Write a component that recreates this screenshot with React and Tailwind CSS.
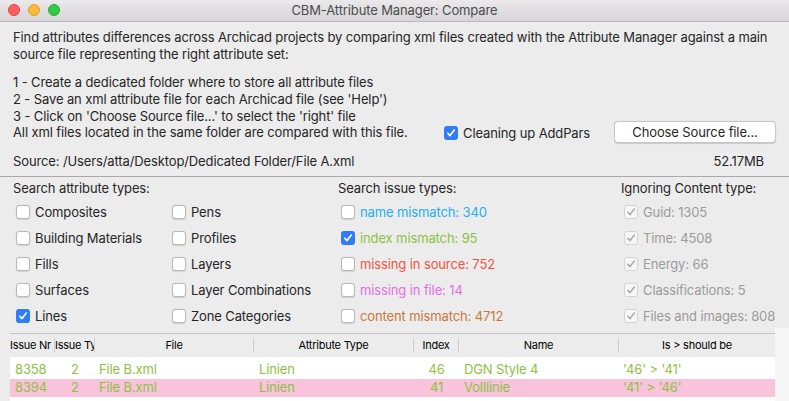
import React from 'react';

const FONT = { fontFamily: 'Inter, "Liberation Sans", sans-serif' };

function Check({ checked = false, disabled = false }) {
  if (disabled) {
    return (
      <span className="flex h-[14px] w-[14px] shrink-0 items-center justify-center rounded-[3px] border border-[#d4d4d4] bg-[#f6f6f6]">
        {checked && (
          <svg width="10" height="10" viewBox="0 0 10 10">
            <path d="M1.8 5.2 L4 7.6 L8.3 2" fill="none" stroke="#a8a8a8" strokeWidth="1.5" strokeLinecap="round" strokeLinejoin="round" />
          </svg>
        )}
      </span>
    );
  }
  if (checked) {
    return (
      <span className="flex h-[14px] w-[14px] shrink-0 items-center justify-center rounded-[3px] bg-[#2f7cf6]">
        <svg width="10" height="10" viewBox="0 0 10 10">
          <path d="M1.8 5.2 L4 7.6 L8.3 2" fill="none" stroke="#ffffff" strokeWidth="1.6" strokeLinecap="round" strokeLinejoin="round" />
        </svg>
      </span>
    );
  }
  return <span className="h-[14px] w-[14px] shrink-0 rounded-[3px] border border-[#b9b9b9] bg-white shadow-[0_0.5px_1px_rgba(0,0,0,0.12)]" />;
}

function Option({ label, checked, disabled, color }) {
  return (
    <div className="flex h-[26px] items-center gap-[5px] whitespace-nowrap pl-[3px]">
      <Check checked={checked} disabled={disabled} />
      <span className={disabled ? 'text-[#9b9b9b]' : ''} style={color ? { color } : undefined}>
        {label}
      </span>
    </div>
  );
}

const attrCol1 = [
  { label: 'Composites' },
  { label: 'Building Materials' },
  { label: 'Fills' },
  { label: 'Surfaces' },
  { label: 'Lines', checked: true }
];

const attrCol2 = [
  { label: 'Pens' },
  { label: 'Profiles' },
  { label: 'Layers' },
  { label: 'Layer Combinations' },
  { label: 'Zone Categories' }
];

const issues = [
  { label: 'name mismatch: 340', color: '#23aef2' },
  { label: 'index mismatch: 95', color: '#8dc23f', checked: true },
  { label: 'missing in source: 752', color: '#f1533f' },
  { label: 'missing in file: 14', color: '#e86ce3' },
  { label: 'content mismatch: 4712', color: '#c9783a' }
];

const ignoring = [
  'Guid: 1305',
  'Time: 4508',
  'Energy: 66',
  'Classifications: 5',
  'Files and images: 808'
];

const columns = [
  { key: 'nr', header: 'Issue Nr', w: 'w-[45px]', head: 'justify-start', cell: 'pl-[5px]' },
  { key: 'type', header: 'Issue Type', w: 'w-[40px]', head: 'justify-start', cell: 'justify-center' },
  { key: 'file', header: 'File', w: 'w-[159px]', head: 'justify-center', cell: 'pl-[4px]' },
  { key: 'attr', header: 'Attribute Type', w: 'w-[160px]', head: 'justify-center', cell: 'pl-[5px]' },
  { key: 'index', header: 'Index', w: 'w-[45px]', head: 'justify-center', cell: 'justify-center' },
  { key: 'name', header: 'Name', w: 'w-[160px]', head: 'justify-center', cell: 'pl-[5px]' },
  { key: 'is', header: 'Is > should be', w: 'w-[156px]', head: 'justify-center', cell: 'pl-[4px]' }
];

const rows = [
  { nr: '8358', type: '2', file: 'File B.xml', attr: 'Linien', index: '46', name: 'DGN Style 4', is: "'46' > '41'" },
  { nr: '8394', type: '2', file: 'File B.xml', attr: 'Linien', index: '41', name: 'Volllinie', is: "'41' > '46'", pink: true }
];

export default function App() {
  return (
    <div className="h-[401px] w-[789px] overflow-hidden bg-[#ececec] text-[13px] tracking-[-0.12px] text-[#262626]" style={FONT}>
      {/* Title bar */}
      <div className="relative flex h-[22px] items-center justify-center border-b border-[#b9b9b9] bg-gradient-to-b from-[#ebe9eb] to-[#d6d4d6]">
        <div className="absolute left-[8px] top-[4px] flex gap-[8px]">
          <span className="h-[12px] w-[12px] rounded-full border border-[#e2463f] bg-[#fc605c]" />
          <span className="h-[12px] w-[12px] rounded-full border border-[#e1a116] bg-[#fdbc40]" />
          <span className="h-[12px] w-[12px] rounded-full border border-[#2dac2f] bg-[#34c84a]" />
        </div>
        <span className="text-[13px] text-[#4c4c4c]">CBM-Attribute Manager: Compare</span>
      </div>

      <div className="whitespace-nowrap px-[13px] leading-[17px]">
        <p className="pt-[7px]">
          Find attributes differences across Archicad projects by comparing xml files created with the Attribute Manager against a main
          <br />
          source file representing the right attribute set:
        </p>
        <p className="mt-[11px]">
          1 - Create a dedicated folder where to store all attribute files
          <br />
          2 - Save an xml attribute file for each Archicad file (see 'Help')
          <br />
          3 - Click on 'Choose Source file...' to select the 'right' file
        </p>
        <div className="-mt-[4px] flex h-[22px] items-center">
          <span className="w-[431px] shrink-0">All xml files located in the same folder are compared with this file.</span>
          <div className="flex w-[170px] shrink-0 items-center gap-[5px] pt-[2px]">
            <Check checked />
            <span>Cleaning up AddPars</span>
          </div>
          <button className="flex h-[22px] w-[165px] items-center justify-center rounded-[4px] border border-[#c6c6c6] bg-white shadow-[0_0.5px_1px_rgba(0,0,0,0.15)]">
            Choose Source file...
          </button>
        </div>
        <div className="mt-[10px] flex h-[17px] items-center justify-between pr-[12px]">
          <span>Source: /Users/atta/Desktop/Dedicated Folder/File A.xml</span>
          <span>52.17MB</span>
        </div>
      </div>

      <div className="mt-[6px] border-t border-[#a9a9a9]" />

      {/* Search options */}
      <div className="flex px-[13px] pt-[3px] leading-[17px]">
        <div className="w-[325px] shrink-0">
          <div>Search attribute types:</div>
          <div className="mt-[2px] flex">
            <div className="w-[156px] shrink-0">
              {attrCol1.map((o) => (
                <Option key={o.label} {...o} />
              ))}
            </div>
            <div>
              {attrCol2.map((o) => (
                <Option key={o.label} {...o} />
              ))}
            </div>
          </div>
        </div>
        <div className="w-[283px] shrink-0">
          <div>Search issue types:</div>
          <div className="mt-[2px]">
            {issues.map((o) => (
              <Option key={o.label} {...o} />
            ))}
          </div>
        </div>
        <div>
          <div>Ignoring Content type:</div>
          <div className="mt-[2px]">
            {ignoring.map((l) => (
              <Option key={l} label={l} checked disabled />
            ))}
          </div>
        </div>
      </div>

      {/* Results table */}
      <div className="mt-[4px] flex">
        <div className="ml-[10px] w-[765px] shrink-0 border-t border-[#c3c3c3]">
          <div className="flex h-[23px] items-center text-[11px] tracking-[-0.25px] text-black">
            {columns.map((c, i) => (
              <div
                key={c.key}
                className={`flex h-[15px] shrink-0 items-center overflow-hidden whitespace-nowrap ${c.w} ${c.head} ${i < columns.length - 1 ? 'border-r border-[#cfcfcf]' : ''}`}
              >
                {c.header}
              </div>
            ))}
          </div>
          <div className="h-[50px] bg-white pt-[4px] text-[#8dc23f]">
            {rows.map((r) => (
              <div key={r.nr} className={`flex h-[18px] items-center ${r.pink ? 'bg-[#f9c3dc]' : ''}`}>
                {columns.map((c) => (
                  <div key={c.key} className={`flex shrink-0 items-center whitespace-nowrap ${c.w} ${c.cell}`}>
                    {r[c.key]}
                  </div>
                ))}
              </div>
            ))}
          </div>
        </div>
        <div className="-mt-[5px] h-[80px] flex-1 bg-[#f6f6f6]" />
      </div>
    </div>
  );
}
